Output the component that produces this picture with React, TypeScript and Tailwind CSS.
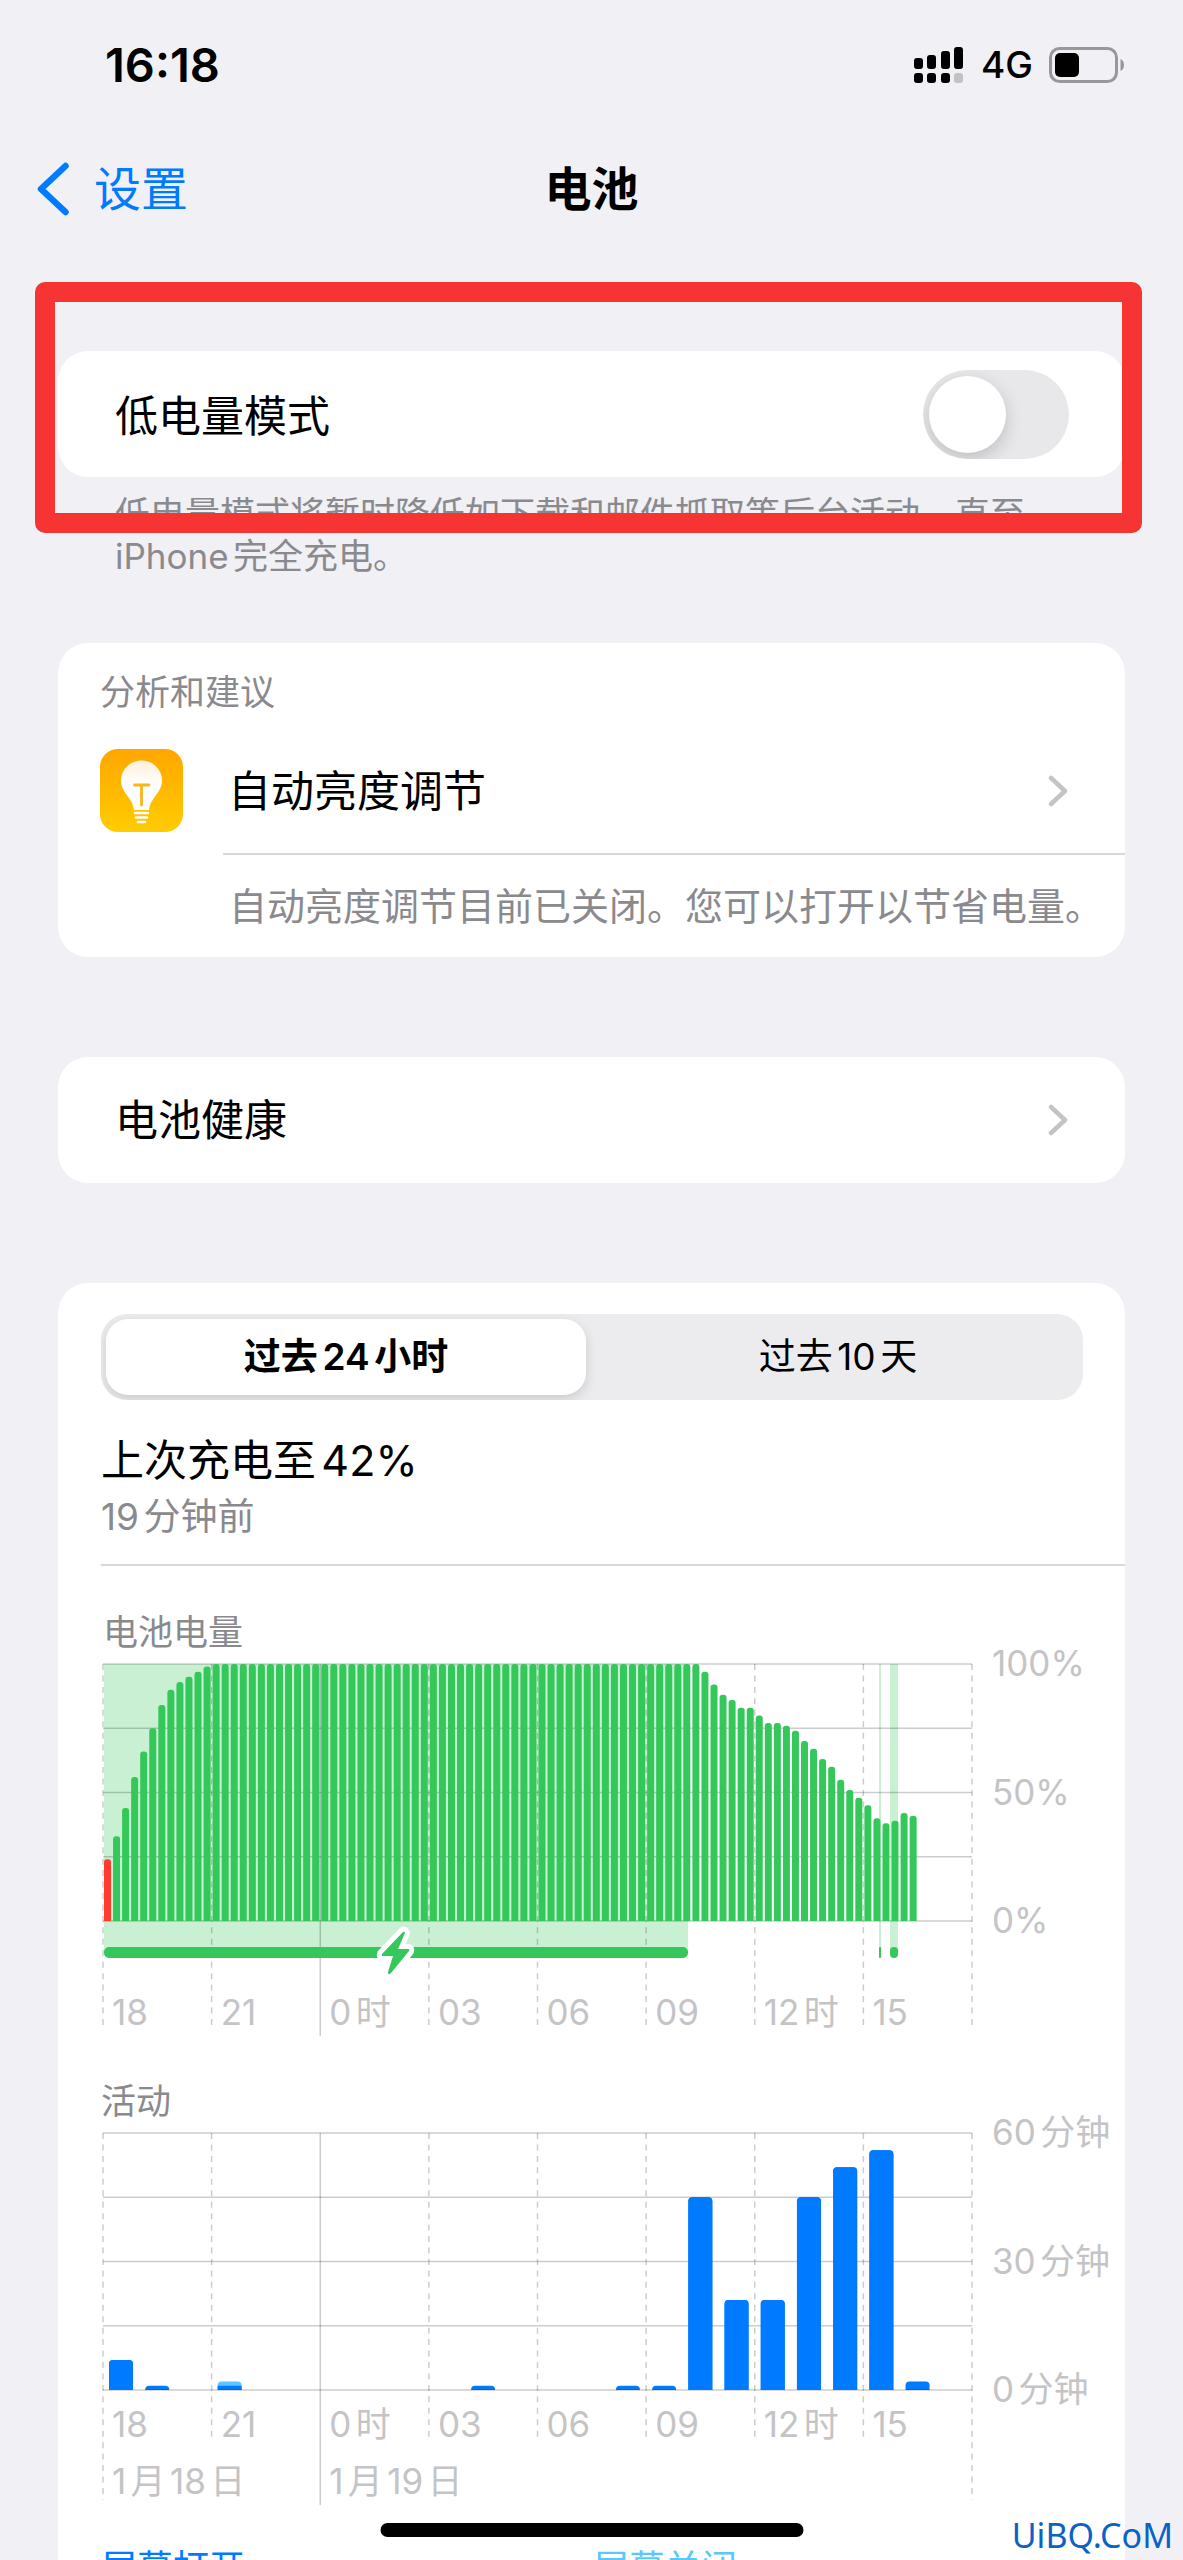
import { useState } from 'react';
import type { ReactNode } from 'react';

const PLOT_LEFT = 2;
const PLOT_TOP = 14;
const PLOT_WIDTH = 869;
const PLOT_HEIGHT = 257;
const PLOT_BOTTOM = PLOT_TOP + PLOT_HEIGHT;

const HOUR_LABELS = ['18', '21', '0时', '03', '06', '09', '12时', '15'];

// Battery level for every quarter of an hour, in percent
const BATTERY_LEVELS = [
  24, 33, 44, 56, 66, 75, 84, 90, 93, 95, 97, 99,
  ...Array<number>(54).fill(100),
  97, 92, 88, 86, 83, 83, 80, 77, 77, 76, 74, 70, 67, 63, 60, 55, 51, 48, 45, 40, 38, 39, 42, 41,
];

// Minutes of use per hour
const ACTIVITY = [
  { hour: 0, on: 7, off: 0 },
  { hour: 1, on: 1, off: 0 },
  { hour: 3, on: 1, off: 1 },
  { hour: 10, on: 1, off: 0 },
  { hour: 14, on: 1, off: 0 },
  { hour: 15, on: 1, off: 0 },
  { hour: 16, on: 45, off: 0 },
  { hour: 17, on: 21, off: 0 },
  { hour: 18, on: 21, off: 0 },
  { hour: 19, on: 45, off: 0 },
  { hour: 20, on: 52, off: 0 },
  { hour: 21, on: 56, off: 0 },
  { hour: 22, on: 2, off: 0 },
];

const CHARGING = [
  { x: 3, width: 584 },
  { x: 778, width: 2 },
  { x: 789, width: 8 },
];

const topRounded = (x: number, y: number, w: number, bottom: number, radius: number) => {
  const r = Math.min(radius, bottom - y);
  return `M${x} ${bottom}V${y + r}Q${x} ${y} ${x + r} ${y}H${x + w - r}Q${x + w} ${y} ${x + w} ${y + r}V${bottom}Z`;
};

function StatusBar() {
  return (
    <div className="flex h-[130px] items-center justify-between pr-[58px] pl-[105px]">
      <time className="text-[47px] leading-[54px] font-semibold">16:18</time>
      <div className="flex items-center">
        <svg className="h-9 w-[49px]" viewBox="0 0 49 36" aria-hidden="true">
          <rect x="0" y="11" width="9" height="11" rx="3" />
          <rect x="13" y="8" width="9" height="14" rx="3" />
          <rect x="27" y="4" width="9" height="18" rx="3" />
          <rect x="40" y="0" width="9" height="22" rx="3" />
          <rect x="0" y="26" width="9" height="10" rx="3" />
          <rect x="13" y="26" width="9" height="10" rx="3" />
          <rect x="27" y="26" width="9" height="10" rx="3" />
          <rect x="40" y="26" width="9" height="10" rx="3" fill="#c2c2c6" />
        </svg>
        <span className="ml-[18px] text-[37px] leading-[44px] font-medium">4G</span>
        <svg className="ml-4 h-9 w-[76px]" viewBox="0 0 76 36" aria-hidden="true">
          <rect x="1.5" y="1.5" width="66" height="33" rx="9" fill="none" stroke="#98989c" strokeWidth="3" />
          <rect x="6" y="6" width="24" height="24" rx="5" />
          <path d="M71.500 12Q75 13.500 75 18T71.500 24Z" fill="#98989c" />
        </svg>
      </div>
    </div>
  );
}

function NavBar() {
  return (
    <header className="grid h-[118px] grid-cols-3 items-center px-[34px]">
      <a href="#settings" className="flex items-center text-[47px] leading-[60px] text-[#007aff]">
        <svg className="mr-6 h-[54px] w-9" viewBox="0 0 36 54" fill="none" aria-hidden="true">
          <path d="M31.500 4L7 27L31.500 50" stroke="currentColor" strokeWidth="6.500" strokeLinecap="round" strokeLinejoin="round" />
        </svg>
        设置
      </a>
      <h1 className="text-center text-[47px] leading-[60px] font-bold">电池</h1>
    </header>
  );
}

function Chevron() {
  return (
    <svg className="h-[34px] w-5 shrink-0" viewBox="0 0 20 34" fill="none" aria-hidden="true">
      <path d="M3 4L17 17L3 30" stroke="#c4c4c6" strokeWidth="4.500" strokeLinecap="round" strokeLinejoin="round" />
    </svg>
  );
}

function BulbIcon() {
  return (
    <svg className="size-[83px] shrink-0" viewBox="0 0 83 83" aria-hidden="true">
      <defs>
        <linearGradient id="tile" x1="0" y1="0" x2="0" y2="1">
          <stop offset="0" stopColor="#ffa600" />
          <stop offset="1" stopColor="#ffcc00" />
        </linearGradient>
        <linearGradient id="bulb" x1="0" y1="0" x2="0" y2="1">
          <stop offset="0" stopColor="#fff0da" />
          <stop offset="0.5" stopColor="#ffffff" />
        </linearGradient>
      </defs>
      <rect width="83" height="83" rx="18" fill="url(#tile)" />
      <path
        d="M41.500 11.500C30 11.500 21 20.500 21 31.500C21 44 32.500 48 34 61H49C50.500 48 62 44 62 31.500C62 20.500 53 11.500 41.500 11.500Z"
        fill="url(#bulb)"
      />
      <path d="M34.500 36H49M41.500 36V56" stroke="#f8b61c" strokeWidth="2.800" strokeLinecap="round" fill="none" />
      <path d="M35 64H48M36 68.500H47M38 73H45" stroke="#fff" strokeWidth="2.600" strokeLinecap="round" />
    </svg>
  );
}

function Card({ children, className = '' }: { children: ReactNode; className?: string }) {
  return <section className={`rounded-[30px] bg-white ${className}`}>{children}</section>;
}

function GridLines({ tallEdges = false }: { tallEdges?: boolean }) {
  const step = PLOT_WIDTH / 8;
  return (
    <g stroke="#000" strokeOpacity="0.2" strokeWidth="1.5">
      {[0, 1, 2, 3, 4].map((row) => {
        const y = PLOT_TOP + (PLOT_HEIGHT * row) / 4;
        return <line key={row} x1={PLOT_LEFT} x2={PLOT_LEFT + PLOT_WIDTH} y1={y} y2={y} />;
      })}
      {[0, 1, 2, 3, 4, 5, 6, 7, 8].map((col) => {
        const x = PLOT_LEFT + col * step;
        const edge = col === 0 || col === 8;
        const bottom = tallEdges && edge ? 381 : tallEdges ? 323 : 379;
        if (col === 2) return <line key={col} x1={x} x2={x} y1={PLOT_TOP} y2={386} />;
        return <line key={col} x1={x} x2={x} y1={PLOT_TOP} y2={bottom} strokeDasharray="6 5.45" />;
      })}
    </g>
  );
}

function AxisLabels({ values, baseline }: { values: string[]; baseline: number }) {
  return (
    <g fill="#c4c4c6" fontSize="35">
      {values.map((value, i) => (
        <text key={value} x="891" y={PLOT_TOP + 12 + (PLOT_HEIGHT * i) / 2}>
          {value}
        </text>
      ))}
      {HOUR_LABELS.map((label, i) => (
        <text key={label} x={PLOT_LEFT + 9 + (PLOT_WIDTH / 8) * i} y={baseline}>
          {label}
        </text>
      ))}
    </g>
  );
}

function BatteryChart() {
  const step = PLOT_WIDTH / 96;
  return (
    <svg className="-mt-6 block w-full" viewBox="0 -24 1024 410" role="img" aria-label="电池电量">
      {CHARGING.map(({ x, width }) => (
        <rect key={x} x={x} y={PLOT_TOP} width={width} height="288" fill="#caf0d3" />
      ))}
      <GridLines />
      {BATTERY_LEVELS.map((level, i) => {
        const y = PLOT_BOTTOM - (PLOT_HEIGHT * level) / 100;
        return (
          <path
            key={i}
            d={topRounded(PLOT_LEFT + 1 + i * step, y, 7, PLOT_BOTTOM, 3)}
            fill={i === 0 ? '#ff3b30' : '#34c759'}
          />
        );
      })}
      {CHARGING.map(({ x, width }) => (
        <rect key={x} x={x} y="297" width={width} height="11" rx={Math.min(5, width / 2)} fill="#34c759" />
      ))}
      <path
        d="M302 282L281 304Q280 306 282 306H292L287 322Q287 326 290 323L308 301Q309 299 307 299H297L304 283Q303 281 302 282Z"
        fill="#34c759"
        stroke="#fff"
        strokeWidth="10"
        strokeLinejoin="round"
        paintOrder="stroke"
      />
      <AxisLabels values={['100%', '50%', '0%']} baseline={375} />
    </svg>
  );
}

function ActivityChart() {
  const step = PLOT_WIDTH / 24;
  return (
    <svg className="-mt-6 block w-full" viewBox="0 -24 1024 411" role="img" aria-label="活动">
      {ACTIVITY.map(({ hour, on, off }) => {
        const x = PLOT_LEFT + 6 + hour * step;
        const height = (minutes: number) => (PLOT_HEIGHT * minutes) / 60;
        return (
          <g key={hour}>
            {off > 0 && <path d={topRounded(x, PLOT_BOTTOM - height(on + off), 24, PLOT_BOTTOM, 4)} fill="#5ac8fa" />}
            <path d={topRounded(x, PLOT_BOTTOM - height(on), 24, PLOT_BOTTOM, off > 0 ? 0 : 4)} fill="#007aff" />
          </g>
        );
      })}
      <GridLines tallEdges />
      {ACTIVITY.filter(({ on }) => on > 2).map(({ hour, on }) => (
        <path
          key={hour}
          d={topRounded(PLOT_LEFT + 6 + hour * step, PLOT_BOTTOM - (PLOT_HEIGHT * on) / 60, 24, PLOT_BOTTOM, 4)}
          fill="#007aff"
        />
      ))}
      <AxisLabels values={['60分钟', '30分钟', '0分钟']} baseline={318} />
      <g fill="#c4c4c6" fontSize="35">
        <text x={PLOT_LEFT + 9} y="375">1月18日</text>
        <text x={PLOT_LEFT + 9 + PLOT_WIDTH / 4} y="375">1月19日</text>
      </g>
    </svg>
  );
}

export default function App() {
  const [lowPower, setLowPower] = useState(false);
  const [range, setRange] = useState<'day' | 'tenDays'>('day');

  const segment = (active: boolean) =>
    `flex-1 rounded-[22px] text-[37px] leading-[48px] ${
      active ? 'bg-white font-semibold shadow-[0_4px_12px_rgba(0,0,0,0.14)]' : ''
    }`;

  return (
    <div className="relative h-screen overflow-hidden bg-[#f0f0f5] font-['Inter','Noto_Sans_CJK_SC',sans-serif] text-black [text-autospace:normal]">
      <StatusBar />
      <NavBar />

      <main className="px-[58px] pt-[103px]">
        <div className="relative">
          <Card className="flex h-[126px] items-center justify-between pr-14 pl-[57px]">
            <label htmlFor="low-power" className="pt-1 text-[43px] leading-[56px]">
              低电量模式
            </label>
            <input
              id="low-power"
              type="checkbox"
              role="switch"
              checked={lowPower}
              onChange={(e) => setLowPower(e.target.checked)}
              className="flex h-[89px] w-[146px] appearance-none items-center overflow-hidden rounded-full bg-[#e8e8ea] px-[6px] before:size-[77px] before:rounded-full before:bg-white before:shadow-[0_6px_18px_rgba(0,0,0,0.18)] checked:justify-end checked:bg-[#34c759]"
            />
          </Card>
          <p className="mt-4 pr-14 pl-[57px] text-[35px] leading-[42px] text-[#8a8a8e]">
            低电量模式将暂时降低如下载和邮件抓取等后台活动，直至 iPhone完全充电。
          </p>
          {/* Highlight drawn over the low power row */}
          <div className="pointer-events-none absolute -top-[69px] -right-[17px] -left-[23px] h-[251px] rounded-[10px] border-[20px] border-[#f73434]" />
        </div>

        <Card className="mt-[66px] pt-6 pl-[42px]">
          <h2 className="mb-2 text-[35px] leading-[50px] text-[#8a8a8e]">分析和建议</h2>
          <a href="#brightness" className="flex items-center gap-10">
            <BulbIcon />
            <span className="flex h-[130px] flex-1 items-center justify-between border-b-2 border-[#d8d8da] pt-1 pr-[57px] pl-[5px] text-[43px] leading-[56px]">
              自动亮度调节
              <Chevron />
            </span>
          </a>
          <p className="py-[25px] pl-[129px] text-[38px] leading-[52px] whitespace-nowrap text-[#8a8a8e]">
            自动亮度调节目前已关闭。您可以打开以节省电量。
          </p>
        </Card>

        <Card className="mt-[100px]">
          <a href="#health" className="flex h-[126px] items-center justify-between pr-[57px] pl-[57px] text-[43px] leading-[56px]">
            电池健康
            <Chevron />
          </a>
        </Card>

        <Card className="mt-[100px] pt-[31px] pb-8 pl-[43px]">
          <div className="mr-[42px] flex h-[86px] gap-3 overflow-hidden rounded-[26px] bg-[#ececef] p-[5px]">
            <button type="button" className={segment(range === 'day')} onClick={() => setRange('day')}>
              过去24小时
            </button>
            <button type="button" className={segment(range === 'tenDays')} onClick={() => setRange('tenDays')}>
              过去10天
            </button>
          </div>

          <div className="mt-8 border-b-2 border-[#d8d8da] pb-[18px]">
            <h2 className="text-[43px] leading-[56px]">上次充电至42%</h2>
            <p className="text-[37px] leading-[58px] text-[#8a8a8e]">19分钟前</p>
          </div>

          <h3 className="mt-12 pl-[2px] text-[35px] leading-[36px] text-[#8a8a8e]">电池电量</h3>
          <BatteryChart />

          <h3 className="mt-[47px] text-[35px] leading-[36px] text-[#8a8a8e]">活动</h3>
          <ActivityChart />

          <div className="mt-[38px] grid grid-cols-[492px_1fr] text-[36px] leading-[48px]">
            <span className="text-[#007aff]">屏幕打开</span>
            <span className="text-[#5ac8fa]">屏幕关闭</span>
          </div>
        </Card>
      </main>

      {/* Home indicator */}
      <div className="absolute bottom-[23px] left-1/2 h-[14px] w-[423px] -translate-x-1/2 rounded-full bg-black" />
      <span className="absolute right-[10px] bottom-[5px] font-['Noto_Sans',sans-serif] text-[34px] leading-[40px] text-[#0a62c4]">
        UiBQ.CoM
      </span>
    </div>
  );
}
